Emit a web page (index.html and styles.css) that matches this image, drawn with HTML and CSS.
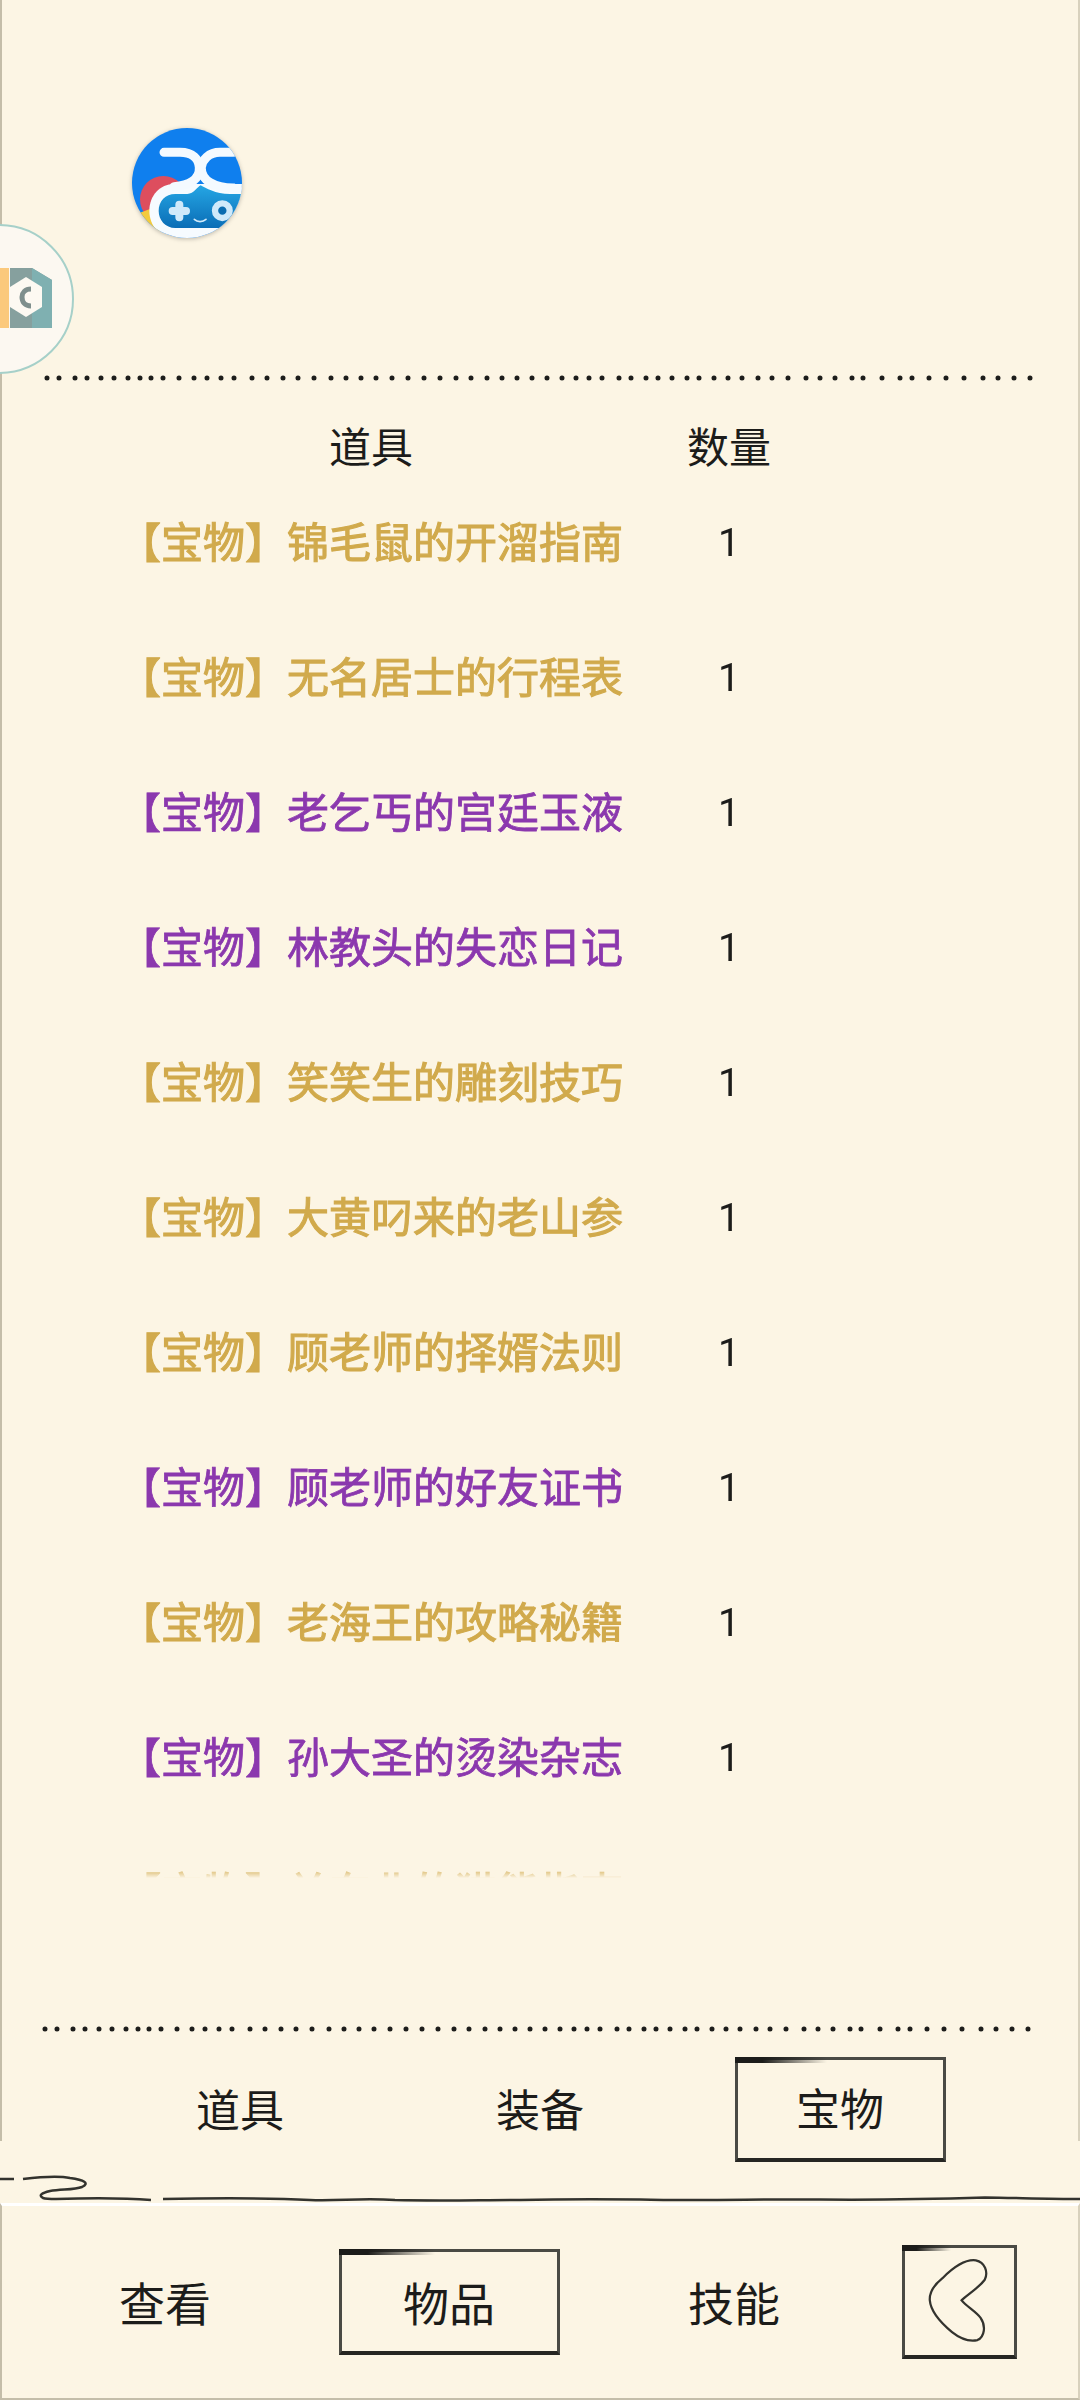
FILE: index.html
```html
<!DOCTYPE html>
<html>
<head>
    <meta charset="utf-8">
    <title>物品</title>
    <link rel="stylesheet" href="styles.css">
</head>
<body>
    <svg class="defs" width="0" height="0">
        <path id="dots" d="M47 6H1032" stroke-dasharray="0 12 0 16 0 12 0 14 0 13 0 14 0 12 0 11 0 12 0 16 0 15 0 13 0 14 0 13 0 18 0 15 0 16 0 15 0 16 0 17 0 15 0 15 0 15 0 16 0 16 0 16 0 16 0 16 0 15 0 16 0 15 0 15 0 15 0 15 0 15 0 14 0 13 0 13 0 17 0 12 0 15 0 12 0 14 0 15 0 12 0 15 0 14 0 14 0 16 0 14 0 16 0 18 0 14 0 15 0 17 0 11 0 19 0 18 0 12 0 17 0 17 0 18 0 19 0 15 0 16 0 16"></path>
    </svg>

    <div class="panel">
        <svg class="rule" viewBox="0 0 1080 12"><use href="#dots"></use></svg>

        <div class="cols head">
            <div>道具</div>
            <div>数量</div>
        </div>

        <div class="list">
            <div class="cols row gold"><div>【宝物】锦毛鼠的开溜指南</div><div class="num">1</div></div>
            <div class="cols row gold"><div>【宝物】无名居士的行程表</div><div class="num">1</div></div>
            <div class="cols row purple"><div>【宝物】老乞丐的宫廷玉液</div><div class="num">1</div></div>
            <div class="cols row purple"><div>【宝物】林教头的失恋日记</div><div class="num">1</div></div>
            <div class="cols row gold"><div>【宝物】笑笑生的雕刻技巧</div><div class="num">1</div></div>
            <div class="cols row gold"><div>【宝物】大黄叼来的老山参</div><div class="num">1</div></div>
            <div class="cols row gold"><div>【宝物】顾老师的择婿法则</div><div class="num">1</div></div>
            <div class="cols row purple"><div>【宝物】顾老师的好友证书</div><div class="num">1</div></div>
            <div class="cols row gold"><div>【宝物】老海王的攻略秘籍</div><div class="num">1</div></div>
            <div class="cols row purple"><div>【宝物】孙大圣的烫染杂志</div><div class="num">1</div></div>
            <div class="cols row gold"><div>【宝物】关东北的猎熊指南</div><div class="num"></div></div>
        </div>

        <svg class="rule rule-low" viewBox="0 0 1080 12"><use href="#dots"></use></svg>

        <div class="tabs">
            <div class="tab">道具</div>
            <div class="tab">装备</div>
            <div class="tab sketch active">宝物</div>
        </div>

        <svg class="wave" viewBox="0 0 1080 41">
            <path d="M0 17H14M23 17C40 15 60 14 70 16C84 18 90 21 82 25C74 28 62 27 50 29C42 31 38 33 43 36C46 37 48 37 56 37C90 36 125 36 151 38M163 37C220 36 270 36 310 38C340 39 360 36 395 38C440 39 480 38 520 38C560 37 600 37 640 37.5C700 39 760 37 820 37.5C880 38 920 37.5 985 35.5C1020 36 1050 37 1080 37"></path>
        </svg>
    </div>

    <div class="nav">
        <div class="nav-item">查看</div>
        <div class="nav-item sketch active-nav">物品</div>
        <div class="nav-item">技能</div>
        <div class="sketch back">
            <svg viewBox="68 50 341 337"><path d="M245 215C262 198 300 175 318 150C330 125 318 95 290 89C260 85 225 105 185 145C160 165 143 190 145 215C148 250 185 290 215 315C240 335 270 345 295 340C318 330 322 295 305 270C290 250 262 235 245 215Z"></path></svg>
        </div>
    </div>

    <!-- floating buttons -->
    <svg class="float-logo" viewBox="96 82 330 330">
        <defs>
            <clipPath id="logoClip"><circle cx="261" cy="247" r="165"></circle></clipPath>
            <linearGradient id="padFill" x1="0" y1="0" x2="0" y2="1">
                <stop offset="0" stop-color="#25a6e4"></stop>
                <stop offset="1" stop-color="#0a6db6"></stop>
            </linearGradient>
        </defs>
        <g clip-path="url(#logoClip)">
            <rect x="96" y="82" width="330" height="330" fill="#0f7fee"></rect>
            <circle cx="190" cy="296" r="70" fill="#dd4e5e"></circle>
            <path d="M96 345L150 325L190 412H96Z" fill="#f3cb3e"></path>
            <path d="M222 250C180 250 148 285 148 330C148 375 180 412 222 412H440V250Z" fill="#f6fbff"></path>
            <path d="M192 155H240C280 155 296 176 298 200C300 235 272 254 222 258" class="logo-stroke"></path>
            <path d="M400 155H360C326 155 306 178 304 200C302 240 345 262 400 262L440 285" class="logo-stroke"></path>
            <path d="M226 280H262C282 280 292 258 302 254C318 262 345 280 390 280H466V382H226C196 382 176 358 176 331C176 302 196 280 226 280Z" fill="url(#padFill)"></path>
            <path d="M238 312V350M218 331H258" stroke="#cfe9fa" stroke-width="24" stroke-linecap="round"></path>
            <circle cx="367" cy="330" r="22" fill="#0b6cb0" stroke="#cfe9fa" stroke-width="19"></circle>
            <path d="M283 356C292 365 308 365 318 356" fill="none" stroke="#cfe9fa" stroke-width="5" stroke-linecap="round"></path>
        </g>
    </svg>

    <div class="float-ball">
        <svg viewBox="0 0 52 62">
            <rect x="0" y="1" width="9" height="60" fill="#fbc97c"></rect>
            <path d="M10 1H32L52 13V61H10Z" fill="#86a09e"></path>
            <path d="M32 1L52 13V61H32Z" fill="#7fb0b1"></path>
            <path d="M26 10L42 20V40L26 50L10 40V20Z" fill="#fdf9f2"></path>
            <path d="M31 22C25 22 22 26 22 30C22 35 25 39 31 39" fill="none" stroke="#7f8f8d" stroke-width="5"></path>
        </svg>
    </div>
</body>
</html>
```

FILE: styles.css
```css
html, body {
    margin: 0;
    padding: 0;
}

body {
    position: relative;
    width: 1080px;
    height: 2400px;
    overflow: hidden;
    background-color: #fcf5e4;
    color: #1c1c1a;
    font-family: "Noto Sans CJK SC", "Noto Sans", sans-serif;
    font-size: 42px;
}

.defs {
    display: block;
    height: 0;
}

#dots {
    fill: none;
    stroke: #1d1d1b;
    stroke-width: 5;
    stroke-linecap: round;
}

.panel {
    position: relative;
    height: 2203px;
    box-sizing: border-box;
    padding-top: 372px;
}

/* thin grey edge of the paper */
.panel::before {
    content: "";
    position: absolute;
    top: 0;
    left: 0;
    right: 0;
    height: 2141px;
    border-left: 2px solid #c4bda9;
    border-right: 2px solid #d8d1bd;
    box-sizing: border-box;
}

.rule {
    display: block;
    width: 1080px;
    height: 12px;
}

.rule-low {
    margin-top: 145px;
    margin-left: -2px;
}

.cols {
    display: grid;
    grid-template-columns: 504px 212px;
    padding-left: 119px;
    align-items: center;
    text-align: center;
    line-height: 1;
}

.head {
    height: 54px;
    padding-top: 34px;
    padding-bottom: 2px;
}

.list {
    height: 1404px;
    overflow: hidden;
    -webkit-mask-image: linear-gradient(#000 calc(100% - 10px), transparent);
    mask-image: linear-gradient(#000 calc(100% - 10px), transparent);
}

.row {
    height: 135px;
    box-sizing: border-box;
    padding-bottom: 4px;
    font-weight: 400;
    -webkit-text-stroke: 1.1px currentColor;
}

.gold {
    color: #d1aa4c;
}

.purple {
    color: #8b38ae;
    -webkit-text-stroke-width: 0.8px;
}

.num {
    padding-top: 8px;
    color: #1c1c1a;
    font-family: Roboto, sans-serif;
    font-size: 39px;
    font-weight: 400;
    -webkit-text-stroke: 0;
}

.tabs {
    display: grid;
    grid-template-columns: repeat(3, 300px);
    padding-left: 90px;
    margin-top: 22px;
    height: 105px;
    align-items: center;
    justify-items: center;
    font-size: 44px;
}

.tab {
    padding-bottom: 4px;
}

.sketch {
    position: relative;
    display: flex;
    align-items: center;
    justify-content: center;
    box-sizing: border-box;
    border: 3px solid #4a4a44;
    border-bottom: 4px solid #262622;
}

/* the pen stroke is heavier where it starts */
.sketch::before {
    content: "";
    position: absolute;
    top: -3px;
    left: -3px;
    width: 45%;
    height: 6px;
    background: linear-gradient(to right, #1c1c1a 30%, rgba(28, 28, 26, 0));
}

.active {
    width: 211px;
    height: 105px;
}

.wave {
    display: block;
    width: 1080px;
    height: 41px;
}

.wave path {
    fill: none;
    stroke: #33332e;
    stroke-width: 2.5;
}

.nav {
    display: grid;
    grid-template-columns: 326px 242px 328px 123px;
    align-items: center;
    justify-items: center;
    box-sizing: border-box;
    height: 197px;
    border-top: 3px solid #fff;
    border-left: 2px solid #c4bda9;
    border-right: 2px solid #d8d1bd;
    border-bottom: 2px solid #c4bda9;
    font-size: 46px;
}

.nav-item {
    padding-bottom: 2px;
}

.active-nav {
    width: 221px;
    height: 106px;
}

.back {
    width: 115px;
    height: 114px;
}

.back svg {
    display: block;
    width: 100%;
    height: 100%;
}

.back path {
    fill: none;
    stroke: #33332e;
    stroke-width: 7;
}

.float-logo {
    position: absolute;
    left: 132px;
    top: 128px;
    width: 110px;
    height: 110px;
    filter: drop-shadow(0 1px 2px rgba(0, 0, 0, 0.25));
}

.logo-stroke {
    fill: none;
    stroke: #f4faff;
    stroke-width: 27;
    stroke-linecap: round;
}

.float-ball {
    position: absolute;
    left: -76px;
    top: 224px;
    width: 150px;
    height: 150px;
    box-sizing: border-box;
    border: 2px solid #a6d0c9;
    border-radius: 50%;
    background-color: #fcf8f1;
}

.float-ball svg {
    position: absolute;
    left: 74px;
    top: 41px;
    width: 52px;
    height: 62px;
}
```
